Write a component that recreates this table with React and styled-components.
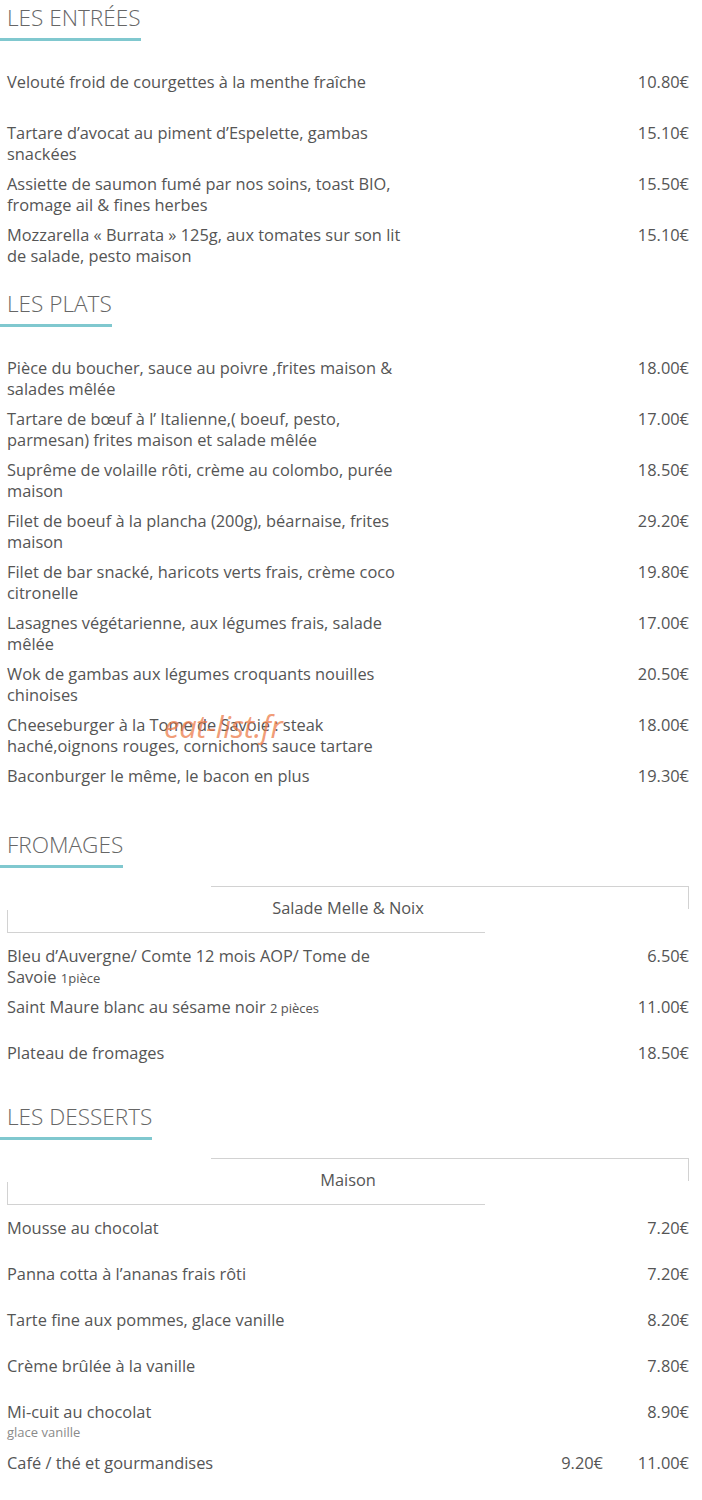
import React from 'react';
import styled, { createGlobalStyle } from 'styled-components';

const GlobalStyle = createGlobalStyle`
    body {
        margin: 0;
        background: #fff;
        font-family: "Open Sans", "Liberation Sans", sans-serif;
        color: #555;
    }
`

const teal = '#80c8cf'

const menu = [
    {
        title: 'LES ENTRÉES',
        tall: true,
        items: [
            { name: 'Velouté froid de courgettes à la menthe fraîche', prices: ['10.80€'] },
            { name: 'Tartare d’avocat au piment d’Espelette, gambas snackées', prices: ['15.10€'] },
            { name: 'Assiette de saumon fumé par nos soins, toast BIO, fromage ail & fines herbes', prices: ['15.50€'] },
            { name: 'Mozzarella « Burrata » 125g, aux tomates sur son lit de salade, pesto maison', prices: ['15.10€'] },
        ],
    },
    {
        title: 'LES PLATS',
        tall: true,
        items: [
            { name: 'Pièce du boucher, sauce au poivre ,frites maison & salades mêlée', prices: ['18.00€'] },
            { name: 'Tartare de bœuf à l’ Italienne,( boeuf, pesto, parmesan) frites maison et salade mêlée', prices: ['17.00€'] },
            { name: 'Suprême de volaille rôti, crème au colombo, purée maison', prices: ['18.50€'] },
            { name: 'Filet de boeuf à la plancha (200g), béarnaise, frites maison', prices: ['29.20€'] },
            { name: 'Filet de bar snacké, haricots verts frais, crème coco citronelle', prices: ['19.80€'] },
            { name: 'Lasagnes végétarienne, aux légumes frais, salade mêlée', prices: ['17.00€'] },
            { name: 'Wok de gambas aux légumes croquants nouilles chinoises', prices: ['20.50€'] },
            { name: 'Cheeseburger à la Tome de Savoie : steak haché,oignons rouges, cornichons sauce tartare', prices: ['18.00€'] },
            { name: 'Baconburger le même, le bacon en plus', prices: ['19.30€'] },
        ],
    },
    {
        title: 'FROMAGES',
        banner: 'Salade Melle & Noix',
        items: [
            { name: 'Bleu d’Auvergne/ Comte 12 mois AOP/ Tome de Savoie', note: '1pièce', prices: ['6.50€'] },
            { name: 'Saint Maure blanc au sésame noir', note: '2 pièces', prices: ['11.00€'] },
            { name: 'Plateau de fromages', prices: ['18.50€'] },
        ],
    },
    {
        title: 'LES DESSERTS',
        banner: 'Maison',
        items: [
            { name: 'Mousse au chocolat', prices: ['7.20€'] },
            { name: 'Panna cotta à l’ananas frais rôti', prices: ['7.20€'] },
            { name: 'Tarte fine aux pommes, glace vanille', prices: ['8.20€'] },
            { name: 'Crème brûlée à la vanille', prices: ['7.80€'] },
            { name: 'Mi-cuit au chocolat', desc: 'glace vanille', prices: ['8.90€'] },
            { name: 'Café / thé et gourmandises', prices: ['9.20€', '11.00€'] },
        ],
    },
]

const Page = styled.div`
    position: relative;
    width: 702px;
    padding: 0 13px 40px 0;
    box-sizing: border-box;
`

const Section = styled.section`
    margin-top: 18px;

    &:first-child {
        margin-top: 3px;
    }
`

const Heading = styled.h2`
    display: inline-block;
    margin: 0;
    padding: 0 0 5px 7px;
    font-size: 22.6px;
    line-height: 30px;
    font-weight: 300;
    color: #666;
    border-bottom: 3px solid ${teal};
`

const Banner = styled.div`
    position: relative;
    margin: 18px 0 8px 7px;
    height: 47px;
    line-height: 44px;
    text-align: center;
    font-size: 16.4px;
    color: #555;

    &::before, &::after {
        content: '';
        position: absolute;
        width: 70%;
        height: 22px;
        border-color: #d2d2d2;
        border-style: solid;
    }
    &::before {
        top: 0;
        right: 0;
        border-width: 1px 1px 0 0;
    }
    &::after {
        bottom: 0;
        left: 0;
        border-width: 0 0 1px 1px;
    }
`

const List = styled.div`
    margin-top: ${p => p.$afterBanner ? '0' : '26px'};
    padding-left: 7px;
`

const Row = styled.div`
    display: flex;
    justify-content: space-between;
    align-items: flex-start;
    box-sizing: border-box;
    min-height: ${p => p.$tall ? '51px' : '46px'};
    padding: 4px 0 5px;
    font-size: 16.4px;
    line-height: 21px;
`

const Name = styled.div`
    max-width: 408px;
`

const Note = styled.span`
    font-size: 13px;
    line-height: 1;
`

const Desc = styled.div`
    font-size: 13px;
    line-height: 21px;
    color: #8a8a8a;
`

const Prices = styled.div`
    display: flex;
`

const Price = styled.span`
    width: 86px;
    text-align: right;
`

const Watermark = styled.div`
    position: absolute;
    top: 702px;
    left: 164px;
    font-size: 31px;
    font-style: italic;
    letter-spacing: -0.3px;
    color: rgba(236, 120, 68, 0.72);
    pointer-events: none;
`

function MenuRow({ item, tall }) {
    return (
        <Row $tall={tall}>
            <Name>
                {item.name}
                {item.note && <> <Note>{item.note}</Note></>}
                {item.desc && <Desc>{item.desc}</Desc>}
            </Name>
            <Prices>
                {item.prices.map(price => <Price key={price}>{price}</Price>)}
            </Prices>
        </Row>
    )
}

export default function App() {
    return (
        <Page>
            <GlobalStyle />
            {menu.map(section => (
                <Section key={section.title}>
                    <Heading>{section.title}</Heading>
                    {section.banner && <Banner>{section.banner}</Banner>}
                    <List $afterBanner={!!section.banner}>
                        {section.items.map(item => (
                            <MenuRow key={item.name} item={item} tall={section.tall} />
                        ))}
                    </List>
                </Section>
            ))}
            <Watermark>eat-list.fr</Watermark>
        </Page>
    )
}
